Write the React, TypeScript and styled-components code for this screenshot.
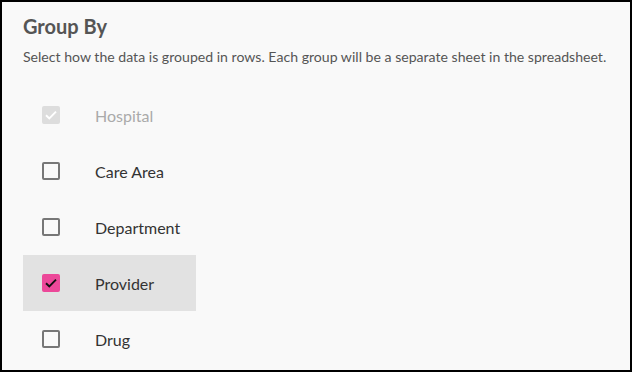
import styled, { createGlobalStyle } from "styled-components";

const GlobalStyle = createGlobalStyle`
  html, body {
    margin: 0;
    padding: 0;
    background: #000;
  }
  * { box-sizing: border-box; }
`;

const Panel = styled.div`
  width: 632px;
  height: 372px;
  border: 2px solid #000;
  background: #f9f9f9;
  padding: 12px 21px 0;
  font-family: Lato, "Open Sans", sans-serif;
  overflow: hidden;
`;

const Title = styled.h2`
  margin: 0;
  font-size: 20px;
  line-height: 24px;
  font-weight: 700;
  color: #555;
`;

const Description = styled.p`
  margin: 10px 0 0;
  font-size: 14.1px;
  line-height: 18px;
  color: #555;
`;

const List = styled.div`
  margin-top: 21px;
  display: flex;
  flex-direction: column;
`;

const Row = styled.label<{ $highlighted?: boolean; $disabled?: boolean }>`
  width: 173px;
  height: 56px;
  display: flex;
  align-items: center;
  padding-left: 19px;
  gap: 35px;
  background: ${p => (p.$highlighted ? "#e2e2e2" : "transparent")};
  color: ${p => (p.$disabled ? "#aaa" : "#333")};
  font-size: 16px;
  cursor: ${p => (p.$disabled ? "default" : "pointer")};
`;

const Box = styled.span<{ $checked?: boolean; $disabled?: boolean }>`
  width: 18px;
  height: 18px;
  flex: none;
  border-radius: 2px;
  display: flex;
  align-items: center;
  justify-content: center;
  border: 2px solid
    ${p => (p.$disabled ? "#ddd" : p.$checked ? "#ec4899" : "#777")};
  background: ${p =>
    p.$disabled ? "#ddd" : p.$checked ? "#ec4899" : "transparent"};
`;

const Check = ({ color }: { color: string }) => (
  <svg width="14" height="14" viewBox="0 0 14 14" fill="none">
    <path d="M2 7.2 L5.3 10.4 L12 3.6" stroke={color} strokeWidth="1.9" />
  </svg>
);

const options = [
  { label: "Hospital", checked: true, disabled: true },
  { label: "Care Area" },
  { label: "Department" },
  { label: "Provider", checked: true, highlighted: true },
  { label: "Drug" },
];

export default function App() {
  return (
    <>
      <GlobalStyle />
      <Panel>
        <Title>Group By</Title>
        <Description>
          Select how the data is grouped in rows. Each group will be a separate
          sheet in the spreadsheet.
        </Description>
        <List>
          {options.map(o => (
            <Row key={o.label} $highlighted={o.highlighted} $disabled={o.disabled}>
              <Box $checked={o.checked} $disabled={o.disabled}>
                {o.checked && <Check color={o.disabled ? "#fff" : "#111"} />}
              </Box>
              {o.label}
            </Row>
          ))}
        </List>
      </Panel>
    </>
  );
}
